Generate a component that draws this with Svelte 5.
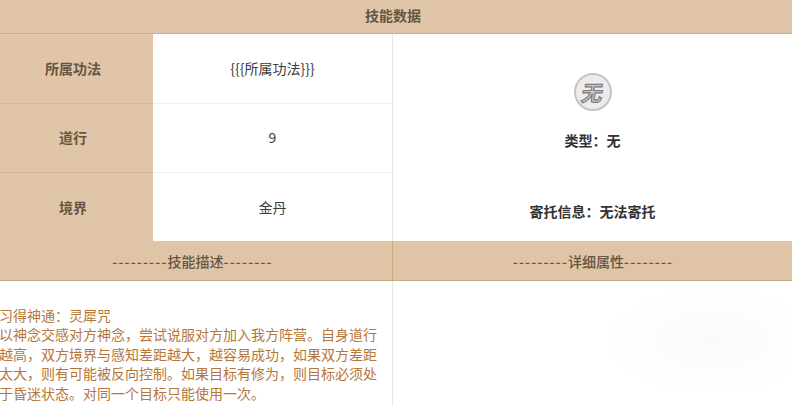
<script>
  const rows = [
    { label: '所属功法', value: '{{{所属功法}}}' },
    { label: '道行', value: '9' },
    { label: '境界', value: '金丹' }
  ];
</script>

<div class="page">
  <div class="title">技能数据</div>

  <div class="top">
    <div class="rows">
      {#each rows as row}
        <div class="row">
          <div class="label">{row.label}</div>
          <div class="value">{row.value}</div>
        </div>
      {/each}
    </div>
    <div class="type">
      <div class="badge"><span>无</span></div>
      <div class="type-name">类型&#xFF1A;无</div>
      <div class="entrust">寄托信息&#xFF1A;无法寄托</div>
    </div>
  </div>

  <div class="heads">
    <div class="head first"><span class="dash">---------</span>技能描述<span class="dash">--------</span></div>
    <div class="head second"><span class="dash">---------</span>详细属性<span class="dash">--------</span></div>
  </div>

  <div class="bottom">
    <div class="desc">
      <p>习得神通&#xFF1A;灵犀咒<br>以神念交感对方神念&#xFF0C;尝试说服对方加入我方阵营&#x3002;自身道行越高&#xFF0C;双方境界与感知差距越大&#xFF0C;越容易成功&#xFF0C;如果双方差距太大&#xFF0C;则有可能被反向控制&#x3002;如果目标有修为&#xFF0C;则目标必须处于昏迷状态&#x3002;对同一个目标只能使用一次&#x3002;</p>
    </div>
    <div class="detail"></div>
  </div>
</div>

<style>
  :global(body) {
    margin: 0;
    background: #fff;
  }

  .page {
    width: 792px;
    height: 406px;
    overflow: hidden;
    font-family: "Noto Sans CJK SC", "Liberation Sans", sans-serif;
    font-size: 14px;
    color: #333;
  }

  .title {
    height: 33px;
    line-height: 30px;
    padding-right: 6px;
    text-align: center;
    font-size: 14px;
    font-weight: 700;
    color: #665542;
    background: #e0c5a8;
    border-bottom: 1px solid #cdab87;
  }

  .top {
    display: grid;
    grid-template-columns: 393px 399px;
    height: 207px;
  }

  .rows {
    display: grid;
    grid-template-rows: 70px 69px 68px;
    border-right: 1px solid #e6e6e6;
  }

  .row {
    display: grid;
    grid-template-columns: 153px 1fr;
    border-bottom: 1px solid #f0f0f0;
  }

  .row:last-child {
    border-bottom: none;
  }

  .label {
    display: flex;
    align-items: center;
    justify-content: center;
    padding-right: 7px;
    padding-bottom: 2px;
    font-weight: 700;
    color: #665542;
    background: #e0c5a8;
    box-shadow: 0 1px 0 #d6b999;
  }

  .row:last-child .label {
    padding-bottom: 0;
    box-shadow: none;
  }

  .value {
    display: flex;
    align-items: center;
    justify-content: center;
    padding-bottom: 2px;
    color: #3c3c3c;
  }

  .row:last-child .value {
    padding-bottom: 0;
  }

  .type {
    display: flex;
    flex-direction: column;
    align-items: center;
    font-weight: 700;
    color: #333;
  }

  .badge {
    width: 34px;
    height: 34px;
    margin-top: 39px;
    border: 2px solid #c4c4c4;
    border-radius: 50%;
    background: #ececec;
    display: flex;
    align-items: center;
    justify-content: center;
    font-size: 21px;
    font-weight: 700;
    color: #c9c9c9;
    -webkit-text-stroke: 1.2px #7d7d7d;
  }

  .badge span {
    transform: skewX(-10deg);
  }

  .type-name {
    margin-top: 19px;
    line-height: 20px;
  }

  .entrust {
    margin-top: 51px;
    line-height: 20px;
  }

  .heads {
    display: grid;
    grid-template-columns: 392px 400px;
    height: 40px;
  }

  .head {
    display: flex;
    align-items: center;
    justify-content: center;
    font-weight: 500;
    color: #665542;
    background: #dfc4a6;
    border-bottom: 1px solid #c9aa87;
    box-sizing: border-box;
  }

  .head.first {
    padding-right: 7px;
  }

  .head.second {
    border-left: 1px solid #c9aa87;
    padding-left: 1px;
  }

  .dash {
    letter-spacing: 1.15px;
  }

  .bottom {
    display: grid;
    grid-template-columns: 393px 399px;
    height: 125px;
  }

  .desc {
    border-right: 1px solid #e6e6e6;
    overflow: hidden;
  }

  .desc p {
    width: 380px;
    margin: 25px 0 0 -1px;
    line-height: 19.4px;
    color: #b5763a;
  }

  .detail {
    background: radial-gradient(ellipse 110px 55px at 320px 60px, #fafafa, #fdfdfd 60%, #fff 100%);
  }
</style>
